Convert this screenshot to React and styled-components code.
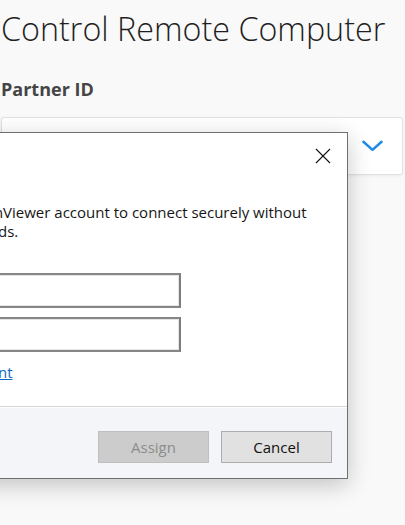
import React from 'react';
import { styled, createGlobalStyle } from 'styled-components';

const GlobalStyle = createGlobalStyle`
  html, body {
    margin: 0;
    padding: 0;
    background: #f9f9f9;
  }
  body {
    font-family: 'Open Sans', 'Noto Sans', sans-serif;
    overflow: hidden;
  }
`;

const App = () => {
  return (
    <>
      <GlobalStyle />
      <Page>
        <Title>Control Remote Computer</Title>
        <Label>Partner ID</Label>
        <Select>
          <Chevron viewBox="0 0 22 12">
            <path d="M1.5 1.5 L11 10 L20.5 1.5" />
          </Chevron>
        </Select>

        <Dialog>
          <DialogHeader>
            <CloseButton aria-label="Close">
              <svg viewBox="0 0 16 16" width="16" height="16">
                <path d="M1 1 L15 15 M15 1 L1 15" />
              </svg>
            </CloseButton>
          </DialogHeader>

          <DialogBody>
            <Message>
              Use your TeamViewer account to connect securely without
              <br />
              using passwords.
            </Message>
            <Fields>
              <Input type="email" />
              <Input type="password" />
            </Fields>
            <Link href="#">Create account</Link>
          </DialogBody>

          <DialogFooter>
            <Button disabled>Assign</Button>
            <Button>Cancel</Button>
          </DialogFooter>
        </Dialog>
      </Page>
    </>
  );
};

export default App;

const Page = styled.div`
  position: relative;
  width: 405px;
  height: 525px;
  box-sizing: border-box;
  padding: 8px 2px 0 1px;
  overflow: hidden;
`;

const Title = styled.h1`
  margin: 0;
  font-family: 'Open Sans', sans-serif;
  font-weight: 300;
  font-size: 32.3px;
  line-height: 40px;
  color: #1f1f1f;
  white-space: nowrap;
`;

const Label = styled.div`
  margin-top: 30px;
  font-family: 'Open Sans', sans-serif;
  font-weight: 700;
  font-size: 18px;
  line-height: 22px;
  color: #454545;
`;

const Select = styled.div`
  margin-top: 17px;
  height: 58px;
  box-sizing: border-box;
  background: #ffffff;
  border: 1px solid #e2e2e2;
  border-radius: 3px;
  box-shadow: 0 1px 3px rgba(0, 0, 0, 0.06);
  display: flex;
  align-items: center;
  justify-content: flex-end;
  padding-right: 19px;
`;

const Chevron = styled.svg`
  width: 21px;
  height: 12px;
  fill: none;
  stroke: #1f8aea;
  stroke-width: 2.6;
  stroke-linecap: round;
  stroke-linejoin: round;
`;

const Dialog = styled.div`
  position: absolute;
  top: 132px;
  left: -107px;
  width: 455px;
  height: 347px;
  box-sizing: border-box;
  background: #ffffff;
  border: 1px solid #6f6f6f;
  box-shadow: 0 6px 22px rgba(0, 0, 0, 0.22);
  display: flex;
  flex-direction: column;
  font-family: 'Open Sans', 'Noto Sans', sans-serif;
  color: #161616;
`;

const DialogHeader = styled.div`
  height: 45px;
  display: flex;
  justify-content: flex-end;
  align-items: center;
  padding-right: 16px;
`;

const CloseButton = styled.button`
  border: none;
  background: none;
  padding: 0;
  width: 16px;
  height: 16px;
  display: flex;
  cursor: pointer;

  svg {
    stroke: #111111;
    stroke-width: 1.1;
    fill: none;
  }
`;

const DialogBody = styled.div`
  flex: 1;
  padding: 25px 20px 0 4px;
  border-bottom: 1px solid #d6d6d6;
`;

const Message = styled.p`
  margin: 0;
  font-size: 15px;
  line-height: 19px;
  white-space: nowrap;
`;

const Fields = styled.div`
  margin-top: 32px;
  display: flex;
  flex-direction: column;
  gap: 9px;
  width: 283px;
`;

const Input = styled.input`
  height: 35px;
  box-sizing: border-box;
  border: 2px solid #878787;
  border-right-color: #7d7d7d;
  box-shadow: inset 0 0 0 1px #e4e4e4;
  background: #ffffff;
  outline: none;
  padding: 0 6px;
`;

const Link = styled.a`
  display: inline-block;
  margin-top: 10px;
  margin-left: 9px;
  font-size: 15px;
  line-height: 20px;
  color: #0a66c8;
  text-decoration: underline;
`;

const DialogFooter = styled.div`
  height: 71px;
  box-sizing: border-box;
  border-top: 1px solid #ffffff;
  background: #f4f5f8;
  display: flex;
  justify-content: flex-end;
  align-items: flex-start;
  gap: 12px;
  padding: 23px 15px 0 0;
`;

const Button = styled.button`
  width: 111px;
  height: 32px;
  box-sizing: border-box;
  font-family: 'Open Sans', 'Noto Sans', sans-serif;
  font-size: 15px;
  background: #e1e1e1;
  border: 1px solid #adadad;
  color: #111111;
  cursor: pointer;

  &:disabled {
    background: #cccccc;
    border-color: #bfbfbf;
    color: #8c8c8c;
    cursor: default;
  }
`;
